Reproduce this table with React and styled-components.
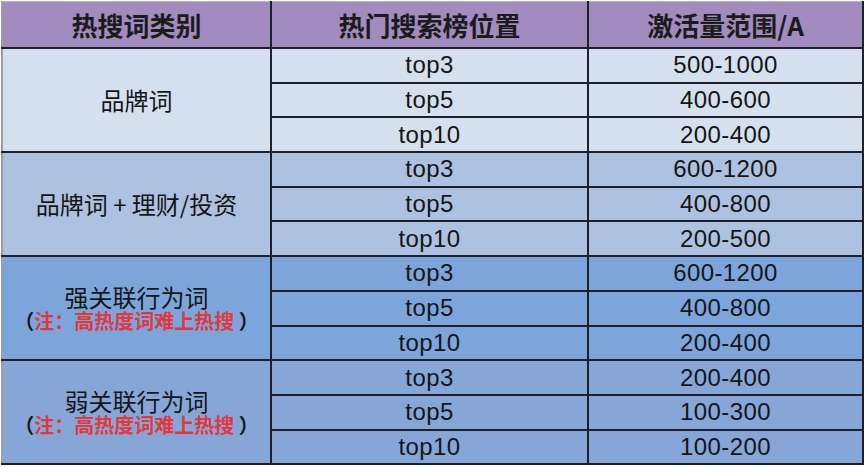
import React from "react";
import styled, { createGlobalStyle } from "styled-components";

const GlobalStyle = createGlobalStyle`
  html, body {
    margin: 0;
    padding: 0;
    background: #ffffff;
  }
  body {
    font-family: "Liberation Sans", "Noto Sans CJK SC", sans-serif;
    color: #151515;
  }
`;

const tones = {
  head: "#a28bbf",
  light: "#d5e0ee",
  mid: "#adc2e0",
  deep: "#7ca5dc",
  soft: "#87a6d8",
};

const Wrap = styled.div`
  padding: 1px 0 0 1px;
  width: 865px;
  height: 467px;
  box-sizing: border-box;
  overflow: hidden;
`;

const Table = styled.table`
  border-collapse: collapse;
  table-layout: fixed;
  width: 861px;
`;

const HeadCell = styled.th`
  height: 45px;
  padding: 0;
  background: ${tones.head};
  border: 2px solid #1d1f2b;
  border-top: 1px solid #b4b4b4;
  border-left: ${p => (p.first ? "2px solid #9c9c9c" : "2px solid #1d1f2b")};
  font-family: "Noto Sans CJK SC", sans-serif;
  font-size: 26px;
  font-weight: 700;
  color: #1b1b1b;
  text-align: center;
  vertical-align: middle;
  line-height: 1;
`;

const GroupCell = styled.td`
  padding: 0;
  background: ${p => tones[p.tone]};
  border: 2px solid #1d1f2b;
  border-left: 2px solid #9c9c9c;
  text-align: center;
  vertical-align: middle;
  font-family: "Noto Sans CJK SC", sans-serif;
`;

const Cell = styled.td`
  height: 32.7px;
  padding: 0;
  background: ${p => tones[p.tone]};
  border: 2px solid #1d1f2b;
  text-align: center;
  vertical-align: middle;
  font-family: "Liberation Sans", "Noto Sans CJK SC", sans-serif;
  font-size: 24px;
  letter-spacing: 0.4px;
  line-height: 1;
`;

const Title = styled.div`
  font-size: 24px;
  line-height: 24px;
`;

const Note = styled.div`
  margin-top: 2px;
  font-size: 20px;
  line-height: 20px;
  font-weight: 700;
  color: #151515;
  white-space: nowrap;

  span {
    color: #e2383b;
  }
`;

const groups = [
  {
    tone: "light",
    title: "品牌词",
    rows: [
      ["top3", "500-1000"],
      ["top5", "400-600"],
      ["top10", "200-400"],
    ],
  },
  {
    tone: "mid",
    title: "品牌词 + 理财/投资",
    rows: [
      ["top3", "600-1200"],
      ["top5", "400-800"],
      ["top10", "200-500"],
    ],
  },
  {
    tone: "deep",
    title: "强关联行为词",
    note: true,
    rows: [
      ["top3", "600-1200"],
      ["top5", "400-800"],
      ["top10", "200-400"],
    ],
  },
  {
    tone: "soft",
    title: "弱关联行为词",
    note: true,
    rows: [
      ["top3", "200-400"],
      ["top5", "100-300"],
      ["top10", "100-200"],
    ],
  },
];

export default function App() {
  return (
    <Wrap>
      <GlobalStyle />
      <Table>
        <colgroup>
          <col style={{ width: 269 }} />
          <col style={{ width: 317 }} />
          <col style={{ width: 275 }} />
        </colgroup>
        <thead>
          <tr>
            <HeadCell first>热搜词类别</HeadCell>
            <HeadCell>热门搜索榜位置</HeadCell>
            <HeadCell>激活量范围/A</HeadCell>
          </tr>
        </thead>
        <tbody>
          {groups.map(g =>
            g.rows.map((r, i) => (
              <tr key={g.title + i}>
                {i === 0 && (
                  <GroupCell tone={g.tone} rowSpan={3}>
                    <Title>{g.title}</Title>
                    {g.note && (
                      <Note>
                        （<span>注：高热度词难上热搜</span> ）
                      </Note>
                    )}
                  </GroupCell>
                )}
                <Cell tone={g.tone}>{r[0]}</Cell>
                <Cell tone={g.tone}>{r[1]}</Cell>
              </tr>
            ))
          )}
        </tbody>
      </Table>
    </Wrap>
  );
}
